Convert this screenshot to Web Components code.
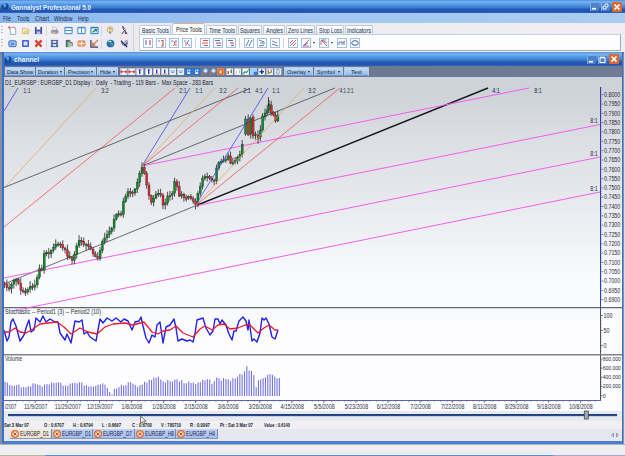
<!DOCTYPE html>
<html lang="en"><head><meta charset="utf-8"><title>Gannalyst Professional 5.0</title>
<style>body{margin:0;width:625px;height:456px;overflow:hidden;background:#edecf1;font-family:"Liberation Sans",Arial,sans-serif}</style></head>
<body><gann-app></gann-app>
<script>
const define=(name,render)=>customElements.define(name,class extends HTMLElement{
  connectedCallback(){ if(this.shadowRoot)return; this.attachShadow({mode:'open'}).innerHTML=render(this); }
});
const num=(e,k,d)=>+(e.getAttribute(k)??d);

/* One line of text fitted to a fixed width */
define('fit-text',e=>{
  const w=num(e,'w',30),s=num(e,'size',6),h=Math.ceil(s+2);
  return `<style>:host{display:block;flex:none;width:${w}px;height:${h}px}svg{display:block;overflow:visible}</style>
  <svg width="${w}" height="${h}"><text x="0" y="${(h/2+s*.36).toFixed(2)}" font-size="${s}" textLength="${w}" lengthAdjust="spacingAndGlyphs" fill="currentColor" font-weight="${e.getAttribute('weight')||400}">${e.textContent}</text></svg>`;
});
const T=(t,w,size=6,extra='')=>`<fit-text w="${w}" size="${size}" ${extra}>${t}</fit-text>`;

const box=(c='')=>`<rect x=".5" y=".5" width="9" height="9" fill="#fff" stroke="#9fc3e8"/>${c}`;
const L=(d,c,w=1)=>`<path d="${d}" fill="none" stroke="${c}" stroke-width="${w}"/>`;
const icons={
 new:`<path d="M2.5 1.5h4l2 2v6h-6z" fill="#fff" stroke="#8aa9d6"/><path d="M0 1.5h3M1.5 0v3.5M6 1l3 2" stroke="#e46a5a"/>`,
 open:`<path d="M1.5 2.5h3l1 1h3v5h-7z" fill="#fff4cf" stroke="#c9b27c"/><path d="M2 8l2-3h6l-2 3z" fill="#e9cf85"/>`,
 save:`<path d="M1 1h8v8H1z" fill="#4c56a8"/><path d="M3 1h4v3H3z" fill="#fff"/><path d="M3 6h4v3H3z" fill="#b9c2ea"/>`,
 print:`<path d="M3 1l4 1 1 3-5-1z" fill="#fff" stroke="#999" stroke-width=".6"/><path d="M1 5l7-1 2 3-3 2-6-1z" fill="#8d93ad"/><path d="M2 7h5" stroke="#f0c35c"/>`,
 rows:`<path d="M1 1.5h8v7H1z" fill="#fff" stroke="#2d79c4"/><path d="M1 2h8M1 5h8" stroke="#2d8ccf"/>`,
 cols:`<path d="M1 1.5h8v7H1z" fill="#fff" stroke="#2d79c4"/><path d="M1 2h8M5 1v7" stroke="#2d8ccf"/>`,
 casc:`<path d="M1 1.5h8v7H1z" fill="#d7f2f5" stroke="#1c6fbd"/><path d="M1 2h8" stroke="#1c6fbd"/><path d="M3 7l4-3M5 4h2v2" fill="none" stroke="#1d8560" stroke-width="1.4"/>`,
 help:`<circle cx="4.5" cy="4" r="3.2" fill="#ffe9c4" stroke="#c8a36d"/><path d="M3.5 3q1.5-1 2 0T4.6 5M4.5 6v3" fill="none" stroke="#765"/>`,
 point:`<path d="M3 0l1 4 2 2 2 3M3 1l3 3M5 5l-3 4M6 5v4" stroke="#4b3f42" stroke-width="1.1" fill="none"/>`,
 cal:`<rect x="1" y="2" width="8" height="6.5" rx="1" fill="#a9cdf5" stroke="#2c5fc4"/><path d="M3 4h4v3H3z" fill="#5b8ade"/>`,
 sq:`<rect x="2" y="2" width="6" height="6" fill="#dbe4ff" stroke="#2a50cf" stroke-width="1.5"/>`,
 x:`<path d="M1.5 1.5l7 7M8.5 1.5l-7 7" stroke="#d5452a" stroke-width="2.5"/>`,
 film:`<path d="M1 1h8v8H1z" fill="#34558f"/><path d="M3 2h4v2.5H3zM3 5.5h4V8H3z" fill="#cfe1fa"/><path d="M1.8 2v6M8.2 2v6" stroke="#fff" stroke-width=".7" stroke-dasharray="1 1"/>`,
 door:`<path d="M2 1h5v8H2z" fill="#556070"/><path d="M4 3h3v6H4z" fill="#8ec794"/><path d="M7 4h2v4" fill="none" stroke="#444"/>`,
 grid:`<rect x="1" y="2" width="8" height="6" rx="1" fill="#ee9b72"/><path d="M1 5h8M5 2v6" stroke="#fff"/><rect x="1" y="2" width="8" height="6" rx="1" fill="none" stroke="#d87548" stroke-width=".7"/>`,
 down:`<path d="M1 1v8h8" fill="none" stroke="#33415f" stroke-width="1.4"/><path d="M9 1L3 7M3 4v3h3" fill="none" stroke="#d87539" stroke-width="1.4"/>`,
 globe:`<circle cx="5" cy="5" r="4.3" fill="#236fbd"/><path d="M2 3q3-2 4 0l-2 2 3 3q2-1 1-3" fill="#4aa65f"/><path d="M2 2l4 1" stroke="#fff"/>`,
 fly:`<path d="M1 1l3 6 2-2 3-3-1 5-3 1-3-2" fill="#4267ae"/><path d="M1 2l7 7" stroke="#36415c" stroke-width="1.5"/><path d="M5 4l3-3" stroke="#cf745a" stroke-width="1.4"/>`,
 p1:box(L('M2 3h2M3 3v4','#5b79cf')+L('M7 2v5','#dd554c',1.3)),
 p2:box(L('M2 3h2','#5b79cf')+L('M5 2.5h2v5.5H5','#dd554c',1.2)),
 p3:box(L('M2 3h2M7 2v3','#5b79cf')+L('M5 3l1 3-2 2M6 7h2','#dd554c')),
 p4:box(L('M2 3h2M7 2L5 5l3 3','#5b79cf')+L('M4 4v4','#dd554c')),
 h1:box(L('M3 2.5h5M2 5h6M4 7.5h4','#e05550',1.2)),
 h2:box(L('M2 2.5h5M4 7.5h4','#5671c9',1.2)+L('M3 5h5','#e05550',1.2)),
 h3:box(L('M2 2.5h5M5 7.5h3','#5671c9',1.2)+L('M4 5h4','#e05550',1.2)),
 l1:box(L('M2 8l3-6M5 8l3-6','#5c7dab')), l2:box(L('M2 2l5 2M3 5h5M2 8l5-1','#5c7dab')), l3:box(L('M2 3l5 2M2 6l6 2','#5c7dab')),
 r1:box(L('M2 8l6-6M2 5l3-3M5 8l3-3','#d96365')), r2:box(L('M2 8l6-6M2 8h6','#d96365')+L('M2 8l5-3','#587ac6')), r3:box(L('M2 2l6 6M3 2h4M2 3v4','#d96365')+L('M2 2l6 3','#587ac6')),
 r4:box(L('M2 7V4h3v3M7 7V3','#527acb')+L('M5 5l3-2','#d96365')), r5:box('<ellipse cx="5" cy="5" rx="3.3" ry="2.3" fill="none" stroke="#405b9a"/>'),
 m1:box(L('M1 5h8M3 3L1 5l2 2M7 3l2 2-2 2','#e03a3e',1.4)),
 m3:box(L('M2.5 2.5h5','#ca4857')+L('M5 2v6','#2440bd',2)), m5:box(L('M5 2v5','#2440bd',2)+L('M2 8h6','#ca4857')),
 m7:box(`<path d="M2 2h6v6H2z" fill="#d8eaff"/>`+L('M2 4h6M3 6h4','#5a8ee3')),
 m9:`<rect width="10" height="10" fill="#2576d7"/><path d="M3 2h4v6H3z" fill="#e9f3ff"/><path d="M4.5 2v3H8" stroke="#1b4eb6" fill="none"/>`,
 mz:`<circle cx="6" cy="3.7" r="2.8" fill="#d6e4ff" stroke="#8298d8"/><path d="M4 6L1 9" stroke="#c86a61" stroke-width="2"/>`,
 mo:`<rect width="10" height="10" fill="#e0824e"/><path d="M2 8V4l3-2 3 3-2 3z" fill="#f3bb8d" stroke="#b8532c"/>`,
 b1:box('<path d="M2 4h2v4H2z" fill="#d33"/><path d="M6 2h2v5H6z" fill="#27934b"/>'), b2:box(L('M3 3v5','#de8580')+L('M7 2v5','#6aa481')), b3:box(L('M1 8l3-3 2 1 3-4','#289a4e',1.5)),
 s1:`<rect width="10" height="10" fill="#9ed0ff"/><path d="M5 5h5v5H5z" fill="#3976d2"/>`, s2:box(L('M5 2v6M2 5h6','#1a34b8',2)), s3:box(L('M3 2v6M7 2v3','#c27c4e',2)+L('M4 7l4-2','#4f9361',1.5)), s4:box(L('M3 2h4v6H3z','#7782b8')+L('M5 2v6','#b6a1b1'))
};
define('tool-icon',e=>{const s=num(e,'size',9),w=num(e,'w',13);
 return `<style>:host{display:flex;flex:none;width:${w}px;justify-content:center;align-items:center}svg{display:block}</style><svg width="${s}" height="${s}" viewBox="0 0 10 10">${icons[e.getAttribute('name')]}</svg>`});
const I=(n,w=13,s=9)=>`<tool-icon name="${n}" w="${w}" size="${s}"></tool-icon>`;

define('win-controls',e=>{const p=e.hasAttribute('main');
 return `<style>:host{display:flex;gap:2px;align-items:center}svg{display:block}</style>
 <svg width="9" height="9"><rect width="9" height="9" rx="1" fill="#4d80c8"/><path d="M0 .5h9M.5 0v9" stroke="#83ade2"/><path d="M2 6.7h4" stroke="#fff" stroke-width="1.6"/></svg>
 <svg width="9" height="9"><rect width="9" height="9" rx="1" fill="#4d80c8"/><path d="M0 .5h9M.5 0v9" stroke="#83ade2"/>${p?'<path d="M4 3V2h3v3H6M2 4h3v3H2z" fill="none" stroke="#e9f4ff"/>':'<path d="M2 2.5h5v5H2z" fill="none" stroke="#fff"/><path d="M2 2.5h5" stroke="#fff" stroke-width="1.6"/>'}</svg>
 <svg width="10" height="10"><rect width="10" height="10" rx="1" fill="#d96a32"/><path d="M2.5 2.5l5 5M7.5 2.5l-5 5" stroke="#fff" stroke-width="1.7"/></svg>`});

define('title-bar',e=>`<style>:host{display:flex;align-items:center;box-sizing:border-box;color:#e8f2ff;padding:0 3px 0 ${e.hasAttribute('main')?1:0}px;background:linear-gradient(#4b8fe0 0,#79b2f0 14%,#5094e2 38%,#3b7dd2 58%,#2457b4 72%,#2453b2 92%,#386bbf)}
 win-controls{margin-left:auto}svg{margin-right:2px;display:block}</style>
 <svg width="8" height="9"><circle cx="4" cy="4.5" r="3.6" fill="#1a4a93"/><path d="M1 2q3-2 4 0t-1 4" fill="#4f9ce4"/></svg><slot></slot><win-controls ${e.hasAttribute('main')?'main':''}></win-controls>`);

define('menu-bar',()=>`<style>:host{display:flex;align-items:center;height:10px;padding-left:3px;background:linear-gradient(90deg,#8cb8ef,#a1c6f0 50%,#a9cdf0);color:#1d2c45}fit-text{margin-right:5.5px}</style>
 ${T('File',8,6.8)}${T('Tools',12.5,6.8)}${T('Chart',14,6.8)}${T('Window',18.5,6.8)}${T('Help',10.5,6.8)}`);

define('tool-panel',()=>`<style>:host{display:grid;grid-template-rows:13px 13px;box-sizing:border-box;width:134px;height:29px;padding-top:1px;background:linear-gradient(90deg,#f4f3f8,#eae8f1);border-right:1px solid #d3d2dd}
 div{display:flex;align-items:center;padding-left:1px}i{flex:none;width:2px;margin-right:2.5px;height:9px;background:repeating-linear-gradient(#bcbcc8 0 1px,transparent 1px 3px)}b{flex:none;width:1px;height:10px;background:#d5d4df;margin:0 1px 0 0}</style>
 <div><i></i>${I('new')}${I('open')}${I('save',14)}<b></b>${I('print',14)}${I('rows')}${I('cols')}${I('casc')}<b></b>${I('help',16)}${I('point',12)}</div>
 <div><i></i>${I('cal')}${I('sq')}${I('x',14)}<b></b>${I('film',14)}${I('door')}${I('grid')}${I('down')}<b></b>${I('globe',16)}${I('fly',12)}</div>`);

const tabs=[['Basic Tools',32,27],['Price Tools',33,26,1],['Time Tools',31,26],['Squares',24,20],['Angles',22,17],['Zero Lines',29,25],['Stop Loss',28,23],['Indicators',28,24]];
define('tool-tabs',()=>`<style>:host{display:grid;grid-template-rows:11px 17px 1px;flex:1;padding-left:5px;background:linear-gradient(90deg,#ecebf0,#f0eef3)}
 .tabs{display:flex;align-items:flex-end;gap:1px}.tab{box-sizing:border-box;height:9px;display:flex;align-items:center;justify-content:center;background:linear-gradient(#fff,#e8edf5);border:1px solid #bccadb;border-bottom:0;border-radius:2px 2px 0 0;color:#28344b}
 .on{height:11px;background:#fdfdff;border-top-color:#e7af78;color:#222}
 .body{display:flex;align-items:center;box-sizing:border-box;margin-right:4px;border:1px solid #c2cfdf;border-right:1px solid #9eafc5;border-bottom-color:#a1aebb;background:#fdfdff;padding-left:1px}
 b{flex:none;width:1px;height:10px;background:#ccd2dd;margin:0 2px}i{flex:none;border:1.8px solid transparent;border-top:2px solid #333;border-bottom:0;margin:0 2px 0 1px}</style>
 <div class="tabs">${tabs.map(t=>`<div class="tab ${t[3]?'on':''}" style="width:${t[1]}px">${T(t[0],t[2],6.4)}</div>`).join('')}</div>
 <div class="body">${['p1','p2','p3','p4'].map(n=>I(n,13,10)).join('')}<b></b>${['h1','h2','h3'].map(n=>I(n,13,10)).join('')}<b></b>${['l1','l2','l3'].map(n=>I(n,13,10)).join('')}<b></b>${I('r1',13,10)}${I('r2',13,10)}<i></i>${I('r3',13,10)}<i></i>${I('r4',13,10)}${I('r5',14,10)}</div>`);

const btn=(t,w,tw,arrow)=>`<div class="btn" style="width:${w}px">${T(t,tw,6.2)}${arrow?'<i></i>':''}</div>`;
define('chart-toolbar',()=>`<style>:host{display:flex;align-items:center;gap:1px;height:11px;padding-left:1px;background:linear-gradient(90deg,#68768f,#707c95)}
 .btn{flex:none;box-sizing:border-box;height:9px;display:flex;align-items:center;justify-content:space-evenly;background:linear-gradient(#c5dcf6,#94bbea);border:1px solid #afccec;border-bottom-color:#7196c9;color:#16253f}
 i{border:1.5px solid transparent;border-top:2px solid #222;border-bottom:0}.ic{display:flex;height:9px;padding:0 1px}</style>
 ${btn('Data Show',30,26)}${btn('Duration',28,20,1)}${btn('Precision',31,22,1)}${btn('Hide',21,11,1)}
 <div class="ic">${['m1','m1','m3','m3','m5','m5','m7','m7','m9','m9','mz','mz','mo','b1','b2','b3','s1','s2','s3','s4'].map(n=>I(n,8.1,7.5)).join('')}</div>
 ${btn('Overlay',29,19,1)}${btn('Symbol',29,18,1)}${btn('Text',25,11)}`);

/* Piecewise linear interpolation through [x, y] pairs */
const lerp=(pts,x)=>{for(let i=1;i<pts.length;i++)if(x<=pts[i][0]){const[a,b]=pts[i-1],[c,d]=pts[i];return b+(d-b)*(x-a)/(c-a)}return pts.at(-1)[1]};
const pairs=s=>s.trim().split(/\s+/).map(p=>p.split(',').map(Number));
const rnd=i=>{const v=Math.sin(i*12.9898+4.1)*43758.5453;return v-Math.floor(v)};
const price=pairs(`2,283 4,284 8,290 13,280 16,280 20,288 23,291 27,291 31,286 34,288 37,278 40,268 42,269 43,256 45,253 50,254 55,245 60,245 64,247 68,257 73,261 76,248 78,241 83,243 90,248 94,254 98,258 101,245 106,237 112,226 117,212 121,216 124,196 128,193 134,194 138,178 142,167 146,180 149,196 152,202 156,193 160,192 163,206 168,197 172,193 175,181 179,195 187,197 192,199 195,205 198,193 202,181 206,174 210,180 214,181 217,165 222,159 228,157 232,165 235,161 240,154 243,141`);
const txt=(s,x,y,w,sz=6,c='#27303e',a='start')=>`<text x="${x}" y="${y}" font-size="${sz}" fill="${c}" text-anchor="${a}" textLength="${w}" lengthAdjust="spacingAndGlyphs">${s}</text>`;
const ln=(x1,y1,x2,y2,c,w=.8)=>`<line x1="${x1}" y1="${y1}" x2="${x2}" y2="${y2}" stroke="${c}" stroke-width="${w}"/>`;
const paneCss='<style>:host{display:block}svg{display:block}</style>';

define('price-pane',()=>{
 let s='';
 const B='#4343f2',O='#dfa962',R='#f0574f',K='#42474b',M='#f55df0';
 s+=ln(4,111,18,88,B)+ln(4,188,96,88,O)+ln(4,227,175,88,R)+ln(4,187.5,250,88.5,K)+ln(4,284,195,206,K)+ln(195,206,488,88,'#171a1d',1.4)+ln(142,166,335,88,K)
 +ln(142,166,529,88,M,1)+ln(195,206,600,124.5,M,1)+ln(4,278,600,157,M,1)+ln(12,311,600,192,M,1);
 let prev=283,c=[];
 for(let i=0,x=4.5;x<244;i++,x+=2.33){const y=lerp(price,x)+(rnd(i)-.5)*3.5;c.push([x,prev,y]);prev=y}
 c.push([245.5,134,119],[248.2,119,135],[250.7,134,118],[253,117,136],[255.5,135,134],[258,135,139],[260.4,137,130],[262.6,130,116],[265,117,113],[267.2,113,110],[269,110,104],[271.2,105,113],[273.4,112,115],[275.5,115,121],[277.8,121,115]);
 c.forEach(([x,o,y],i)=>{const t=Math.min(o,y),b=Math.max(o,y,t+1.4),hi=t-1-rnd(i+50)*4.5,lo=b+1+rnd(i+90)*4;
  s+=ln(x,hi.toFixed(1),x,lo.toFixed(1),'#22242a',.8)+`<rect x="${(x-.95).toFixed(1)}" y="${t.toFixed(1)}" width="2" height="${(b-t).toFixed(1)}" fill="${y<=o?'#0b8a25':'#ed2430'}" stroke="#1b2a20" stroke-width=".35"/>`});
 s+=ln(268.5,97,268.5,106,'#22242a',.8);
 s+=ln(142,166,190,88,B)+ln(142,166,214.5,88,O)+ln(142,166,238,88,R)+ln(195,206,268,88,B)+ln(195,206,304,88,O)+ln(195,206,340,88,R);
 [['1:1',27],['3:2',105],['2:1',183],['1:1',199],['3:2',223],['2:1',247],['4:1',259],['1:1',276],['3:2',312],['4:1',343],['2:1',350.3],['4:1',496],['8:1',538]].forEach(([t,x])=>s+=txt(t,x,93,x>340&&x<360?6.3:7.5,6.5,x===496?'#17174c':'#27303e','middle'));
 [123,155.5,190.5].forEach(y=>s+=txt('8:1',594,y,7.5,6.5,'#27303e','middle'));
 s+=ln(600.5,87,600.5,307,'#3a3fae',1);
 for(let i=0;i<23;i++){const y=94.7+i*9.32;s+=ln(601,y,603.5,y,'#555f7c',.7)+txt((0.8-i*.005).toFixed(4),604,(y+2.2).toFixed(1),16.3,6.3);for(let k=1;k<5;k++)s+=ln(601,y-k*1.86,602,y-k*1.86,'#7079a0',.5)}
 return paneCss+`<svg width="618" height="220" viewBox="4 87 618 220"><defs><linearGradient id="g" x1="0" y1="0" x2="0" y2="1"><stop stop-color="#cdd2d8"/><stop offset=".25" stop-color="#dcdfe4"/><stop offset=".45" stop-color="#e5e6eb"/><stop offset=".7" stop-color="#f1f2f6"/><stop offset=".88" stop-color="#fafbfd"/></linearGradient></defs><rect x="4" y="87" width="618" height="220" fill="url(#g)"/>${s}</svg>`});

define('stochastic-pane',()=>{
 const blue='4,330 7,341 9,337 11,322 14,319 17,326 20,341 25,335 27,325 30,320 32,330 34,330 36,318 40,321 43,317 46,322 50,319 55,322 59,322 62,333 66,342 68,334 71,343 75,321 79,322 82,320 84,334 87,332 90,337 96,341 100,318 103,323 107,318 112,321 116,319 121,322 125,318 128,322 132,330 136,323 139,321 141,317 143,326 146,337 149,343 152,335 155,337 157,325 160,323 163,343 166,327 170,325 174,319 176,328 178,341 182,339 187,341 190,340 193,342 195,334 197,320 200,319 203,318 206,328 210,335 213,331 215,319 218,319 220,324 222,320 226,325 229,334 232,340 234,331 236,331 239,321 243,317 246,321 248,330 249,320 252,341 254,339 257,342 260,333 262,318 264,320 266,318 269,324 272,337 275,339 278,330';
 /* the first 200px follow the wider oscillation traced on the left */
 const left='4,330 7,341 9,337 11,322 13,319 16,326 20,341 24,335 27,325 29,320 31,332 34,330 36,318 40,322 43,316 46,322 50,319 55,322 58,322 60,333 65,340 67,334 71,343 75,321 79,322 82,320 84,334 87,332 90,337 96,341 100,319 103,323 107,318 112,321 116,318 121,322 124,319 128,321 132,330 135,322 139,321 141,317 143,326 146,338 149,343 152,335 155,337 157,325 160,322 163,343 166,327 170,325 174,319 176,328 178,341';
 const rest=blue.slice(blue.indexOf('182,339'));
 const red='4,332 9,332 15,328 20,332 26,333 33,329 40,324 48,323 57,322 64,327 71,334 80,328 88,332 97,334 105,327 113,324 125,323 133,325 144,322 152,332 158,334 163,331 170,330 176,326 183,333 193,337 200,329 205,326 212,330 218,325 224,324 230,329 238,328 245,325 250,325 258,333 264,328 269,325 275,330 278,330';
 let s=ln(4,307.7,622,307.7,'#65676b',1.3)+ln(12,311,33,307,'#f55df0')+txt('Stochastic --  Period1 (3) --  Period2 (10)',5,313.5,96,6.7)+ln(600.5,307,600.5,354,'#4d5367',1);
 s+=`<polyline points="${left} ${rest}" fill="none" stroke="#2020e6" stroke-width="1.4" stroke-linejoin="round"/><polyline points="${red}" fill="none" stroke="#ee1a2c" stroke-width="1.3" stroke-linejoin="round"/>`;
 [[315.5,'100',9],[330.5,'50',6],[345.7,'0',3]].forEach(([y,t,w])=>s+=ln(601,y,603,y,'#555')+txt(t,603.5,y+2,w,6.3));
 for(let y=318;y<352;y+=3)s+=ln(601,y,602,y,'#777',.5);
 return paneCss+`<svg width="618" height="47" viewBox="4 307 618 47"><rect x="4" y="307" width="618" height="47" fill="#fdfdff"/><rect x="4" y="308" width="618" height="12" fill="#f8fafc"/>${s}</svg>`});

define('volume-pane',()=>{
 const v=pairs('4,382 12,385 20,386 30,387 32,383 40,386 50,384 60,383 66,386 72,383 80,383 88,387 95,385 100,383 105,386 109,391 111,394 115,388 119,387 124,384 130,383 135,386 140,385 145,382 150,379 156,377 158,376 162,382 170,381 176,380 184,382 192,383 200,382 208,378 211,385 216,377 220,380 224,376 228,381 236,378 240,373 243,376 245.5,364 248,371 250,370 253,373 255,389 258,380 262,379 266,377 270,374 274,376 278,379');
 let s=ln(4,354.7,622,354.7,'#828489',1.5)+txt('Volume',5,360.5,17,6.5);
 for(let i=0,x=4.5;x<279;x+=2.325,i++){const y=lerp(v,x)+(x<236||x>262?(rnd(i)-.5)*3:0);s+=`<rect x="${x.toFixed(1)}" y="${y.toFixed(1)}" width="1.1" height="${(396-y).toFixed(1)}" fill="#7475df"/>`}
 s+=ln(4,400.5,601,400.5,'#5963a6',1)+ln(600.5,355,600.5,400,'#4d5367',1);
 ['800,000','600,000','400,000','200,000','0'].forEach((t,i)=>{const y=359+i*9.15;s+=ln(601,y,602.5,y,'#555')+txt(t,602.8,y+2,i<4?18:3,6.2)});
 for(let y=361;y<399;y+=2.3)s+=ln(601,y,602,y,'#777',.5);
 const d=['/2007','11/9/2007','11/29/2007','12/19/2007','1/8/2008','1/28/2008','2/15/2008','3/6/2008','3/26/2008','4/15/2008','5/5/2008','5/23/2008','6/12/2008','7/2/2008','7/22/2008','8/11/2008','8/29/2008','9/18/2008','10/8/2008'];
 d.forEach((t,i)=>{const x=i?35.7+(i-1)*32.15-(i>3?1.3*(i/18):0):10.6,w={5:11.6,8:20.5,9:23.5,10:26}[t.length];s+=txt(t,x,409,w,6.4,'#27303e','middle');if(i)s+=ln(x-.5,401,x-.5,403,'#555f8f',.8)});
 for(let x=10;x<600;x+=6.43)s+=ln(x,401,x,402,'#7c82a5',.6);
 return paneCss+`<style>svg{overflow:visible}</style><svg width="618" height="57" viewBox="4 354 618 57"><rect x="4" y="354" width="618" height="57" fill="#fdfdff"/>${s}</svg>`});

define('time-slider',()=>`<style>:host{display:block;height:10px}svg{display:block;overflow:visible;position:relative;z-index:1}</style><svg width="618" height="10" viewBox="4 411 618 10"><rect x="4" y="411" width="618" height="10" fill="#e9eaf0"/><path d="M8 415h609" stroke="#1c3c82" stroke-width="1.8"/><path d="M8 416.3h609" stroke="#9fb1d1" stroke-width=".6"/><rect x="584.3" y="411" width="4" height="8" fill="#a5a8ae" stroke="#454a54" stroke-width=".8"/><path d="M140.5 416v7.5l1.8-1.8 1.1 2.6 1.4-.7-1.1-2.4h2.5z" fill="#eee" stroke="#333" stroke-width=".6"/></svg>`);

define('quote-status',()=>{const a=[['Sat 3 Mar 07',25,15],['O : 0.6707',20,9],['H : 0.6794',20,9],['L : 0.6697',19,11],['C : 0.6700',20,9],['V : 780710',20,9],['R : 0.0097',20,10],['Pt : Sat 3 Mar 07',33,11],['Value : 0.6140',26,0]];
 return `<style>:host{display:flex;align-items:center;height:8px;background:#efeff4;color:#20242b}</style>`+a.map(q=>`<div style="margin-right:${q[2]}px">${T(q[0],q[1],5.2,'weight="600"')}</div>`).join('')});

define('chart-tab',e=>{const on=e.hasAttribute('active');return `<style>:host{display:flex;flex:none;align-items:center;gap:1px;box-sizing:border-box;width:41.6px;height:10px;padding-left:1px;border-right:1px solid #768ab5;border-bottom:1px solid #8798c5;background:${on?'linear-gradient(#f5ead9,#ede1cc)':'linear-gradient(#c0d2f4,#a5bfee)'};color:#1c2947}</style><svg width="8" height="8"><circle cx="4" cy="4" r="3.4" fill="#fbd7b6" stroke="#dc6d33" stroke-width="1.2"/><path d="M2.5 2.5l3 3M5.5 2.5l-3 3" stroke="#c85221"/></svg>${T(e.textContent,29,6.5)}`});
define('chart-tabs',()=>`<style>:host{display:flex;height:12px;padding-left:6px;background:#e6e7ee}span{margin-left:auto;display:flex;align-items:center;gap:2px;padding-right:3px}path{fill:none;stroke:#9499a5}</style>
 <chart-tab active>EURGBP_D1</chart-tab><chart-tab>EURGBP_D1</chart-tab><chart-tab>EURGBP_D7</chart-tab><chart-tab>EURGBP_H8</chart-tab><chart-tab>EURGBP_H4</chart-tab><span><svg width="8" height="6"><path d="M2.5 1l-2 2 2 2zM5.5 1l2 2-2 2z"/></svg></span>`);

define('chart-window',()=>`<style>:host{display:grid;grid-template-rows:14px 11px 10px 220px 47px 57px 10px 8px 12px;box-sizing:border-box;width:621px;height:392px;margin-left:2px;border:solid #3c6fc6;border-width:0 1px 3px 2px;border-bottom-color:#4a80d2}
 .info{display:flex;align-items:center;background:#ced2d9;color:#1c2532;padding-left:1px}</style>
 <title-bar>${T('channel',25,7.8,'weight="700"')}</title-bar><chart-toolbar></chart-toolbar>
 <div class="info">${T('D1_EURGBP : EURGBP_D1 Display :&#160; Daily&#160; - Trading - 119 Bars -&#160; Max Space - 283 Bars',208,6.4)}</div>
 <price-pane></price-pane><stochastic-pane></stochastic-pane><volume-pane></volume-pane><time-slider></time-slider><quote-status></quote-status><chart-tabs></chart-tabs>`);

define('gann-app',()=>`<style>:host{display:grid;grid-template-rows:13px 10px 29px 392px 11px 1px;width:625px;height:456px}.tools{display:flex}
 .work{background:linear-gradient(#6d7380,#878e9f 3px,#8693ac);border-right:1px solid #dcdce5;box-sizing:border-box}.foot{background:#efeff3;border-top:1px solid #adb3bd;box-sizing:border-box}.line{background:linear-gradient(90deg,#b8b495 0 45px,#5a8fe0 45px 553px,#aaa1c6 553px)}</style>
 <title-bar main>${T('Gannalyst Professional 5.0',80,7.8,'weight="700"')}</title-bar><menu-bar></menu-bar>
 <div class="tools"><tool-panel></tool-panel><tool-tabs></tool-tabs></div>
 <div class="work"><chart-window></chart-window></div><div class="foot"></div><div class="line"></div>`);
</script></body></html>
